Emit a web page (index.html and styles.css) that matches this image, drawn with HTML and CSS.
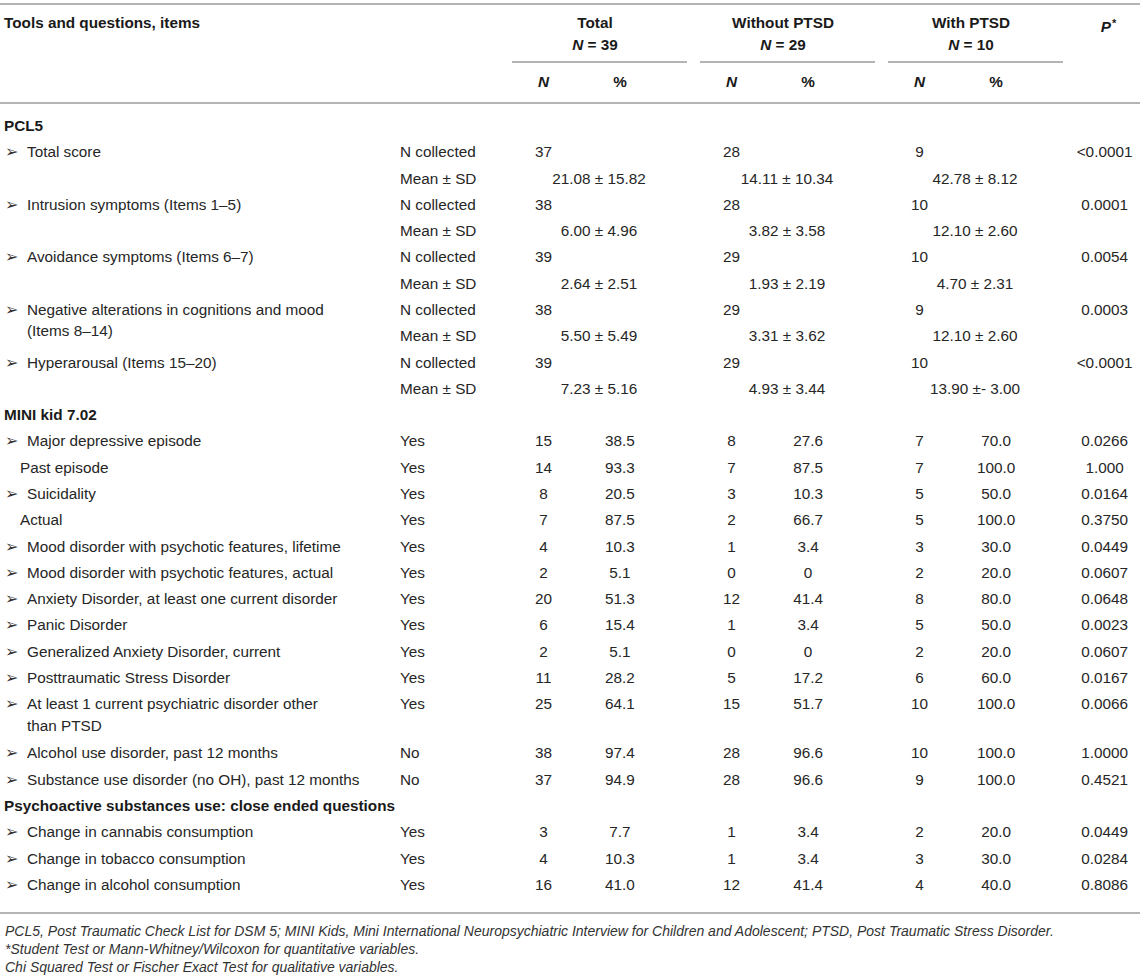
FILE: index.html
```html
<!DOCTYPE html>
<html lang="en">
<head>
<meta charset="utf-8">
<title>Table</title>
<link rel="stylesheet" href="styles.css">
</head>
<body>
<table class="tbl">
  <colgroup>
    <col class="c-label"><col class="c-sub">
    <col class="c-n"><col class="c-pc"><col class="c-sp">
    <col class="c-n"><col class="c-pc"><col class="c-sp">
    <col class="c-n"><col class="c-pc"><col class="c-sp">
    <col class="c-p">
  </colgroup>
  <thead>
    <tr class="h1">
      <th class="th-label" rowspan="2">Tools and questions, items</th>
      <th rowspan="2"></th>
      <th class="grp" colspan="3"><div class="grp-in">Total<br><i>N</i> = 39</div></th>
      <th class="grp" colspan="3"><div class="grp-in">Without PTSD<br><i>N</i> = 29</div></th>
      <th class="grp" colspan="3"><div class="grp-in">With PTSD<br><i>N</i> = 10</div></th>
      <th class="th-p" rowspan="2"><i>P</i><span class="star">*</span></th>
    </tr>
    <tr class="h2">
      <th class="ctr"><i>N</i></th><th class="ctr">%</th><th></th>
      <th class="ctr"><i>N</i></th><th class="ctr">%</th><th></th>
      <th class="ctr"><i>N</i></th><th class="ctr">%</th><th></th>
    </tr>
  </thead>
  <tbody>
    <tr class="sec first"><td colspan="12">PCL5</td></tr>

    <tr><td class="lab" rowspan="2"><span class="ar">➢</span>Total score</td><td>N collected</td><td class="ctr">37</td><td></td><td></td><td class="ctr">28</td><td></td><td></td><td class="ctr">9</td><td></td><td></td><td class="ctr">&lt;0.0001</td></tr>
    <tr><td>Mean ± SD</td><td class="ctr" colspan="3">21.08 ± 15.82</td><td class="ctr" colspan="3">14.11 ± 10.34</td><td class="ctr" colspan="3">42.78 ± 8.12</td><td></td></tr>

    <tr><td class="lab" rowspan="2"><span class="ar">➢</span>Intrusion symptoms (Items 1–5)</td><td>N collected</td><td class="ctr">38</td><td></td><td></td><td class="ctr">28</td><td></td><td></td><td class="ctr">10</td><td></td><td></td><td class="ctr">0.0001</td></tr>
    <tr><td>Mean ± SD</td><td class="ctr" colspan="3">6.00 ± 4.96</td><td class="ctr" colspan="3">3.82 ± 3.58</td><td class="ctr" colspan="3">12.10 ± 2.60</td><td></td></tr>

    <tr><td class="lab" rowspan="2"><span class="ar">➢</span>Avoidance symptoms (Items 6–7)</td><td>N collected</td><td class="ctr">39</td><td></td><td></td><td class="ctr">29</td><td></td><td></td><td class="ctr">10</td><td></td><td></td><td class="ctr">0.0054</td></tr>
    <tr><td>Mean ± SD</td><td class="ctr" colspan="3">2.64 ± 2.51</td><td class="ctr" colspan="3">1.93 ± 2.19</td><td class="ctr" colspan="3">4.70 ± 2.31</td><td></td></tr>

    <tr><td class="lab" rowspan="2"><span class="ar">➢</span>Negative alterations in cognitions and mood<br>(Items 8–14)</td><td>N collected</td><td class="ctr">38</td><td></td><td></td><td class="ctr">29</td><td></td><td></td><td class="ctr">9</td><td></td><td></td><td class="ctr">0.0003</td></tr>
    <tr><td>Mean ± SD</td><td class="ctr" colspan="3">5.50 ± 5.49</td><td class="ctr" colspan="3">3.31 ± 3.62</td><td class="ctr" colspan="3">12.10 ± 2.60</td><td></td></tr>

    <tr><td class="lab" rowspan="2"><span class="ar">➢</span>Hyperarousal (Items 15–20)</td><td>N collected</td><td class="ctr">39</td><td></td><td></td><td class="ctr">29</td><td></td><td></td><td class="ctr">10</td><td></td><td></td><td class="ctr">&lt;0.0001</td></tr>
    <tr><td>Mean ± SD</td><td class="ctr" colspan="3">7.23 ± 5.16</td><td class="ctr" colspan="3">4.93 ± 3.44</td><td class="ctr" colspan="3">13.90 ±- 3.00</td><td></td></tr>

    <tr class="sec"><td colspan="12">MINI kid 7.02</td></tr>
    <tr><td class="lab"><span class="ar">➢</span>Major depressive episode</td><td>Yes</td><td class="ctr">15</td><td class="ctr">38.5</td><td></td><td class="ctr">8</td><td class="ctr">27.6</td><td></td><td class="ctr">7</td><td class="ctr">70.0</td><td></td><td class="ctr">0.0266</td></tr>
    <tr><td class="lab sub">Past episode</td><td>Yes</td><td class="ctr">14</td><td class="ctr">93.3</td><td></td><td class="ctr">7</td><td class="ctr">87.5</td><td></td><td class="ctr">7</td><td class="ctr">100.0</td><td></td><td class="ctr">1.000</td></tr>
    <tr><td class="lab"><span class="ar">➢</span>Suicidality</td><td>Yes</td><td class="ctr">8</td><td class="ctr">20.5</td><td></td><td class="ctr">3</td><td class="ctr">10.3</td><td></td><td class="ctr">5</td><td class="ctr">50.0</td><td></td><td class="ctr">0.0164</td></tr>
    <tr><td class="lab sub">Actual</td><td>Yes</td><td class="ctr">7</td><td class="ctr">87.5</td><td></td><td class="ctr">2</td><td class="ctr">66.7</td><td></td><td class="ctr">5</td><td class="ctr">100.0</td><td></td><td class="ctr">0.3750</td></tr>
    <tr><td class="lab"><span class="ar">➢</span>Mood disorder with psychotic features, lifetime</td><td>Yes</td><td class="ctr">4</td><td class="ctr">10.3</td><td></td><td class="ctr">1</td><td class="ctr">3.4</td><td></td><td class="ctr">3</td><td class="ctr">30.0</td><td></td><td class="ctr">0.0449</td></tr>
    <tr><td class="lab"><span class="ar">➢</span>Mood disorder with psychotic features, actual</td><td>Yes</td><td class="ctr">2</td><td class="ctr">5.1</td><td></td><td class="ctr">0</td><td class="ctr">0</td><td></td><td class="ctr">2</td><td class="ctr">20.0</td><td></td><td class="ctr">0.0607</td></tr>
    <tr><td class="lab"><span class="ar">➢</span>Anxiety Disorder, at least one current disorder</td><td>Yes</td><td class="ctr">20</td><td class="ctr">51.3</td><td></td><td class="ctr">12</td><td class="ctr">41.4</td><td></td><td class="ctr">8</td><td class="ctr">80.0</td><td></td><td class="ctr">0.0648</td></tr>
    <tr><td class="lab"><span class="ar">➢</span>Panic Disorder</td><td>Yes</td><td class="ctr">6</td><td class="ctr">15.4</td><td></td><td class="ctr">1</td><td class="ctr">3.4</td><td></td><td class="ctr">5</td><td class="ctr">50.0</td><td></td><td class="ctr">0.0023</td></tr>
    <tr><td class="lab"><span class="ar">➢</span>Generalized Anxiety Disorder, current</td><td>Yes</td><td class="ctr">2</td><td class="ctr">5.1</td><td></td><td class="ctr">0</td><td class="ctr">0</td><td></td><td class="ctr">2</td><td class="ctr">20.0</td><td></td><td class="ctr">0.0607</td></tr>
    <tr><td class="lab"><span class="ar">➢</span>Posttraumatic Stress Disorder</td><td>Yes</td><td class="ctr">11</td><td class="ctr">28.2</td><td></td><td class="ctr">5</td><td class="ctr">17.2</td><td></td><td class="ctr">6</td><td class="ctr">60.0</td><td></td><td class="ctr">0.0167</td></tr>
    <tr class="two"><td class="lab"><span class="ar">➢</span>At least 1 current psychiatric disorder other<br>than PTSD</td><td>Yes</td><td class="ctr">25</td><td class="ctr">64.1</td><td></td><td class="ctr">15</td><td class="ctr">51.7</td><td></td><td class="ctr">10</td><td class="ctr">100.0</td><td></td><td class="ctr">0.0066</td></tr>
    <tr><td class="lab"><span class="ar">➢</span>Alcohol use disorder, past 12 months</td><td>No</td><td class="ctr">38</td><td class="ctr">97.4</td><td></td><td class="ctr">28</td><td class="ctr">96.6</td><td></td><td class="ctr">10</td><td class="ctr">100.0</td><td></td><td class="ctr">1.0000</td></tr>
    <tr><td class="lab"><span class="ar">➢</span>Substance use disorder (no OH), past 12 months</td><td>No</td><td class="ctr">37</td><td class="ctr">94.9</td><td></td><td class="ctr">28</td><td class="ctr">96.6</td><td></td><td class="ctr">9</td><td class="ctr">100.0</td><td></td><td class="ctr">0.4521</td></tr>

    <tr class="sec"><td colspan="12">Psychoactive substances use: close ended questions</td></tr>
    <tr><td class="lab"><span class="ar">➢</span>Change in cannabis consumption</td><td>Yes</td><td class="ctr">3</td><td class="ctr">7.7</td><td></td><td class="ctr">1</td><td class="ctr">3.4</td><td></td><td class="ctr">2</td><td class="ctr">20.0</td><td></td><td class="ctr">0.0449</td></tr>
    <tr><td class="lab"><span class="ar">➢</span>Change in tobacco consumption</td><td>Yes</td><td class="ctr">4</td><td class="ctr">10.3</td><td></td><td class="ctr">1</td><td class="ctr">3.4</td><td></td><td class="ctr">3</td><td class="ctr">30.0</td><td></td><td class="ctr">0.0284</td></tr>
    <tr class="last"><td class="lab"><span class="ar">➢</span>Change in alcohol consumption</td><td>Yes</td><td class="ctr">16</td><td class="ctr">41.0</td><td></td><td class="ctr">12</td><td class="ctr">41.4</td><td></td><td class="ctr">4</td><td class="ctr">40.0</td><td></td><td class="ctr">0.8086</td></tr>
  </tbody>
</table>
<div class="notes">
  <p>PCL5, Post Traumatic Check List for DSM 5; MINI Kids, Mini International Neuropsychiatric Interview for Children and Adolescent; PTSD, Post Traumatic Stress Disorder.</p>
  <p>*Student Test or Mann-Whitney/Wilcoxon for quantitative variables.</p>
  <p>Chi Squared Test or Fischer Exact Test for qualitative variables.</p>
</div>
</body>
</html>
```

FILE: styles.css
```css
html, body {
  margin: 0;
  padding: 0;
  background: #ffffff;
}
body {
  font-family: "Liberation Sans", Arial, Helvetica, sans-serif;
  color: #262626;
  font-size: 15.3px;
}
.tbl {
  margin-top: 3px;
  width: 1140px;
  border-collapse: collapse;
  table-layout: fixed;
}
.c-label { width: 395px; }
.c-sub { width: 110px; }
.c-n { width: 77px; }
.c-pc { width: 76px; }
.c-sp { width: 35px; }
.c-p { width: 71px; }

.tbl th, .tbl td {
  padding: 2.65px 5px;
  line-height: 21px;
  vertical-align: top;
  text-align: left;
  font-weight: normal;
}
.tbl thead {
  border-top: 2px solid #b4b4b4;
  border-bottom: 2px solid #b4b4b4;
}
.tbl thead th {
  font-weight: bold;
  color: #1a1a1a;
}
.tbl .h1 th {
  padding-top: 7px;
  padding-bottom: 0;
  line-height: 22px;
}
.tbl .th-label { padding-left: 4px; }
.tbl .grp { padding: 7px 0 0 0; }
.grp-in {
  margin: 0 6px 0 7px;
  padding: 0 9px 5px 0;
  text-align: center;
  border-bottom: 2px solid #b4b4b4;
}
.tbl .th-p { text-align: center; padding-left: 8px; padding-right: 0; }
.star {
  font-size: 11px;
  vertical-align: 5px;
  margin-left: 1px;
}
.tbl .h2 th {
  padding-top: 8px;
  padding-bottom: 9px;
  line-height: 22px;
}
.ctr { text-align: center !important; }

.sec td {
  font-weight: bold;
  color: #1a1a1a;
  padding-left: 4px;
}
.tbl .sec.first td { padding-top: 11px; }
.tbl .lab {
  padding-left: 27px;
  padding-right: 10px;
  text-indent: -22px;
}
.tbl .two .lab { line-height: 22px; }
.ar {
  display: inline-block;
  width: 22px;
  line-height: 10px;
  text-indent: 0;
  font-family: "DejaVu Sans", sans-serif;
  font-size: 16px;
  color: #333;
}
.tbl .lab.sub {
  padding-left: 20px;
  text-indent: 0;
}
.tbl .last td {
  padding-bottom: 17px;
}
.tbl tbody {
  border-bottom: 2px solid #b4b4b4;
}
.notes {
  padding: 8px 0 0 5px;
  font-style: italic;
  font-size: 14px;
  color: #333;
}
.notes p {
  margin: 0;
  line-height: 18px;
}
```
